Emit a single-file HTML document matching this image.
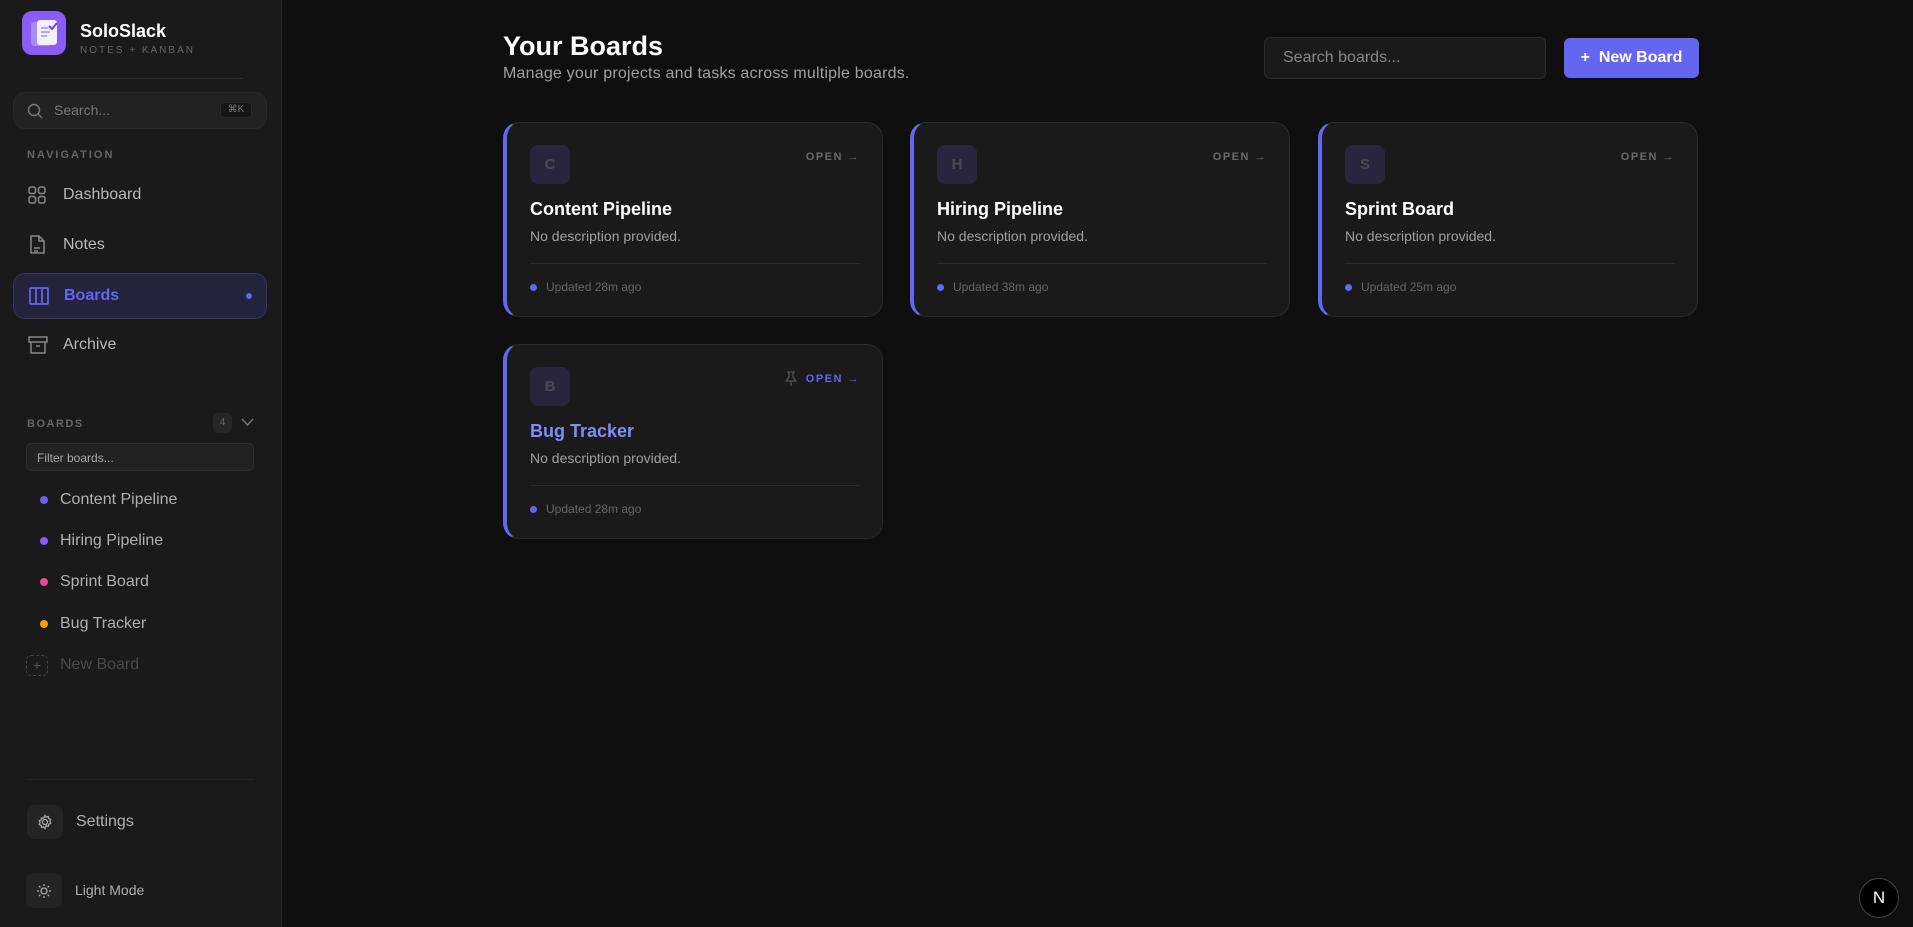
<!DOCTYPE html>
<html><head><meta charset="utf-8"><style>
*{box-sizing:border-box;margin:0;padding:0}
body{width:1913px;height:927px;background:#0f0f0f;font-family:"Liberation Sans",sans-serif;position:relative;overflow:hidden;color:#ddd}
.a{position:absolute}
.sb{left:0;top:0;width:282px;height:927px;background:#1a1a1a;border-right:1px solid #262626}
.nav{position:absolute;left:13px;width:254px;height:46px;display:flex;align-items:center;font-size:16px;color:#b8b8b8}
.nav svg{position:absolute;left:15px}
.nav span{position:absolute;left:50px}
.item{position:absolute;left:40px;font-size:16px;color:#b0b0b0;display:flex;align-items:center}
.item i{width:8px;height:8px;border-radius:50%;margin-right:12px;display:inline-block}
.card{position:absolute;width:380px;height:195px;background:#1a1a1a;border:1px solid #2c2c2c;border-left:4px solid #6366f1;border-radius:16px}
.av{position:absolute;left:23px;top:22px;width:40px;height:39px;border-radius:8px;background:#27263d;color:#4a4a55;font-weight:bold;font-size:15px;display:flex;align-items:center;justify-content:center}
.open{position:absolute;right:22px;top:28px;font-size:11px;font-weight:bold;letter-spacing:1.5px;color:#6a6a6a}
.ct{position:absolute;left:23px;top:76px;font-size:18px;font-weight:bold;color:#fff}
.cd{position:absolute;left:23px;top:105px;font-size:14px;color:#a0a0a0}
.hr{position:absolute;left:23px;right:22px;top:140px;height:1px;background:#2a2a2a}
.up{position:absolute;left:23px;top:157px;font-size:12px;color:#666;display:flex;align-items:center}
.up i{width:7px;height:7px;border-radius:50%;background:#6366f1;margin-right:9px}
</style></head><body>
<div class="a sb"></div>
<div class="a" style="left:22px;top:11px;width:44px;height:44px;border-radius:10px;background:#8b5cf6">
<div class="a" style="left:9px;top:11px;width:20px;height:24px;background:#a78bfa;border-radius:3px"></div>
<div class="a" style="left:15px;top:9px;width:20px;height:25px;background:#f4f0ff;border-radius:3px"></div>
<svg class="a" style="left:15px;top:9px" width="20" height="25"><path d="M4 8h7M4 12h9M4 16h6" stroke="#a78bfa" stroke-width="1.6"/><path d="M12 6l3 3 5-6" stroke="#7c3aed" stroke-width="2" fill="none"/></svg>
</div>
<div class="a" style="left:80px;top:21px;font-size:18px;font-weight:bold;color:#fff">SoloSlack</div>
<div class="a" style="left:80px;top:45px;font-size:10px;letter-spacing:2px;color:#666">NOTES + KANBAN</div>
<div class="a" style="left:40px;top:78px;width:203px;height:1px;background:#2a2a2a"></div>
<div class="a" style="left:13px;top:92px;width:254px;height:37px;border-radius:12px;background:#222;border:1px solid #2a2a2a"></div>
<svg class="a" style="left:27px;top:103px" width="16" height="16" fill="none" stroke="#777" stroke-width="1.5"><circle cx="7" cy="7" r="5.5"/><path d="M11 11l4 4"/></svg>
<div class="a" style="left:54px;top:102px;font-size:14px;color:#777">Search...</div>
<div class="a" style="left:220px;top:102px;width:32px;height:16px;border-radius:4px;background:#161616;border:1px solid #2a2a2a;font-size:10px;color:#777;text-align:center;line-height:14px">⌘K</div>
<div class="a" style="left:27px;top:149px;font-size:11px;letter-spacing:2px;color:#666;font-weight:bold">NAVIGATION</div>
<div class="nav" style="top:172px"><svg width="18" height="18" fill="none" stroke="#888" stroke-width="1.5"><rect x="1" y="1" width="6.5" height="6.5" rx="2"/><rect x="10.5" y="1" width="6.5" height="6.5" rx="2"/><rect x="1" y="10.5" width="6.5" height="6.5" rx="2"/><rect x="10.5" y="10.5" width="6.5" height="6.5" rx="2"/></svg><span>Dashboard</span></div>
<div class="nav" style="top:222px"><svg width="18" height="20" fill="none" stroke="#888" stroke-width="1.5"><path d="M3 1h8l5 5v12H3zM11 1v5h5M6 13h6M6 16h4"/></svg><span>Notes</span></div>
<div class="nav" style="top:273px;background:#24233c;border:1px solid #34336a;border-radius:12px;color:#6366f1;font-weight:bold"><svg width="20" height="18" fill="none" stroke="#6366f1" stroke-width="1.8"><rect x="1" y="1" width="18" height="16" rx="1"/><path d="M7 1v16M13 1v16"/></svg><span>Boards</span><i style="position:absolute;right:14px;width:6px;height:6px;border-radius:50%;background:#6366f1"></i></div>
<div class="nav" style="top:322px"><svg width="20" height="20" fill="none" stroke="#888" stroke-width="1.5"><rect x="1" y="2" width="18" height="5"/><path d="M3 7v11h14V7M8 11h4"/></svg><span>Archive</span></div>
<div class="a" style="left:27px;top:418px;font-size:11px;letter-spacing:1.5px;color:#666;font-weight:bold">BOARDS</div>
<div class="a" style="left:213px;top:413px;width:19px;height:20px;border-radius:5px;background:#262626;font-size:10px;color:#666;text-align:center;line-height:20px">4</div>
<svg class="a" style="left:241px;top:418px" width="13" height="9" fill="none" stroke="#777" stroke-width="1.4"><path d="M1 1l5.5 6 5.5-6"/></svg>
<div class="a" style="left:26px;top:443px;width:228px;height:28px;border-radius:5px;background:#222;border:1px solid #2e2e2e;font-size:12px;color:#aaa;padding:7px 10px">Filter boards...</div>
<div class="item" style="top:491px"><i style="background:#6366f1"></i>Content Pipeline</div>
<div class="item" style="top:532px"><i style="background:#8b5cf6"></i>Hiring Pipeline</div>
<div class="item" style="top:573px"><i style="background:#ec4899"></i>Sprint Board</div>
<div class="item" style="top:615px"><i style="background:#f59e0b"></i>Bug Tracker</div>
<div class="a" style="left:26px;top:655px;width:22px;height:21px;border:1px dashed #444;border-radius:5px;color:#555;font-size:14px;text-align:center;line-height:18px">+</div>
<div class="a" style="left:60px;top:656px;font-size:16px;color:#4a4a4a">New Board</div>
<div class="a" style="left:28px;top:779px;width:226px;height:1px;background:#262626"></div>
<div class="a" style="left:27px;top:805px;width:36px;height:34px;border-radius:8px;background:#242424"></div>
<svg class="a" style="left:37px;top:814px" width="16" height="16" fill="none" stroke="#aaa" stroke-width="1.3"><circle cx="8" cy="8" r="2.5"/><path d="M8 1.5l1.3 1.6 2-.5.5 2 1.9.9-.8 1.9.8 1.9-1.9.9-.5 2-2-.5L8 14.5l-1.3-1.6-2 .5-.5-2-1.9-.9.8-1.9-.8-1.9 1.9-.9.5-2 2 .5z"/></svg>
<div class="a" style="left:76px;top:813px;font-size:16px;color:#b0b0b0">Settings</div>
<div class="a" style="left:26px;top:873px;width:36px;height:35px;border-radius:8px;background:#242424"></div>
<svg class="a" style="left:36px;top:883px" width="16" height="16" fill="none" stroke="#aaa" stroke-width="1.3"><circle cx="8" cy="8" r="3"/><path d="M8 1v2M8 13v2M1 8h2M13 8h2M3 3l1.4 1.4M11.6 11.6L13 13M3 13l1.4-1.4M11.6 4.4L13 3"/></svg>
<div class="a" style="left:75px;top:882px;font-size:14px;color:#b0b0b0">Light Mode</div>

<div class="a" style="left:503px;top:31px;font-size:27px;font-weight:bold;color:#fff">Your Boards</div>
<div class="a" style="left:503px;top:65px;font-size:16px;letter-spacing:0.2px;color:#a0a0a0">Manage your projects and tasks across multiple boards.</div>
<div class="a" style="left:1264px;top:37px;width:282px;height:42px;border-radius:6px;background:#1a1a1a;border:1px solid #2c2c2c;font-size:16px;color:#888;padding:11px 18px">Search boards...</div>
<div class="a" style="left:1564px;top:38px;width:135px;height:40px;border-radius:6px;background:#6366f1;color:#fff;font-weight:bold;font-size:16px;line-height:40px;text-align:center">+&nbsp; New Board</div>

<div class="card" style="left:503px;top:122px"><div class="av">C</div><div class="open">OPEN →</div><div class="ct">Content Pipeline</div><div class="cd">No description provided.</div><div class="hr"></div><div class="up"><i></i>Updated 28m ago</div></div>
<div class="card" style="left:910px;top:122px"><div class="av">H</div><div class="open">OPEN →</div><div class="ct">Hiring Pipeline</div><div class="cd">No description provided.</div><div class="hr"></div><div class="up"><i></i>Updated 38m ago</div></div>
<div class="card" style="left:1318px;top:122px"><div class="av">S</div><div class="open">OPEN →</div><div class="ct">Sprint Board</div><div class="cd">No description provided.</div><div class="hr"></div><div class="up"><i></i>Updated 25m ago</div></div>
<div class="card" style="left:503px;top:344px"><div class="av">B</div>
<svg style="position:absolute;left:277px;top:26px" width="14" height="16" fill="none" stroke="#555" stroke-width="1.3"><path d="M3 1h8M5 1v5L2 10h10L9 6V1M7 10v5"/></svg>
<div class="open" style="color:#6366f1">OPEN →</div><div class="ct" style="color:#818cf8">Bug Tracker</div><div class="cd">No description provided.</div><div class="hr"></div><div class="up"><i></i>Updated 28m ago</div></div>

<div class="a" style="left:1859px;top:878px;width:40px;height:40px;border-radius:50%;background:#000;border:1px solid #444;color:#fff;font-size:17px;text-align:center;line-height:38px;font-weight:300">N</div>
</body></html>
